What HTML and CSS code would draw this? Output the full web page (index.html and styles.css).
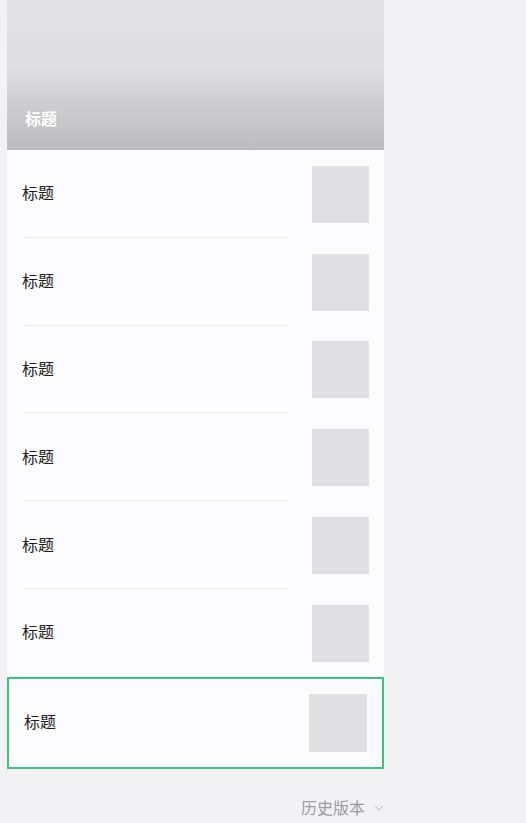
FILE: index.html
```html
<!DOCTYPE html>
<html lang="zh-CN">
<head>
    <meta charset="UTF-8">
    <meta name="viewport" content="width=device-width, initial-scale=1.0">
    <title>标题</title>
    <link rel="stylesheet" href="styles.css">
</head>
<body>
    <div class="panel">
        <!-- 封面 -->
        <div class="cover">
            <span class="cover-title">标题</span>
        </div>

        <!-- 列表 -->
        <div class="item"><span class="item-title">标题</span><div class="thumb"></div></div>
        <div class="item"><span class="item-title">标题</span><div class="thumb"></div></div>
        <div class="item"><span class="item-title">标题</span><div class="thumb"></div></div>
        <div class="item"><span class="item-title">标题</span><div class="thumb"></div></div>
        <div class="item"><span class="item-title">标题</span><div class="thumb"></div></div>
        <div class="item last"><span class="item-title">标题</span><div class="thumb"></div></div>

        <div class="item selected"><span class="item-title">标题</span><div class="thumb"></div></div>
    </div>

    <div class="history">
        历史版本
        <svg class="chevron" width="10" height="6" viewBox="0 0 10 6">
            <path d="M1 1 L5 5 L9 1" fill="none" stroke="#b5b5ba" stroke-width="1"/>
        </svg>
    </div>
</body>
</html>
```

FILE: styles.css
```css
body {
    margin: 0;
    background-color: #f2f2f5;
    font-family: "Noto Sans CJK SC", "Noto Sans", sans-serif;
}

.panel {
    width: 377px;
    margin-left: 7px;
    background-color: #fcfcfe;
}

.cover {
    height: 150px;
    display: flex;
    align-items: flex-end;
    padding: 0 18px 21px;
    box-sizing: border-box;
    background: linear-gradient(#e2e2e5 0%, #dedee1 45%, #cacacd 75%, #bcbcbf 100%);
}

.cover-title {
    color: #ffffff;
    font-size: 16px;
    font-weight: bold;
    line-height: 22px;
}

.item {
    position: relative;
    height: 87.8px;
    display: flex;
    align-items: center;
    justify-content: space-between;
    padding: 0 15px;
    box-sizing: border-box;
}

.item::after {
    content: "";
    position: absolute;
    left: 17px;
    bottom: 0;
    width: 264px;
    height: 1px;
    background-color: #ededf0;
}

.item.last::after,
.item.selected::after {
    display: none;
}

.item-title {
    font-size: 16px;
    color: #1e1e22;
    margin-bottom: 3px;
}

.thumb {
    width: 57px;
    height: 57px;
    background-color: #e0e0e3;
    margin-top: 1px;
}

.item.selected {
    height: 92px;
    border: 2px solid #3ec27f;
    padding: 0 15px;
}

.item.selected .thumb {
    width: 58px;
    height: 58px;
}

.history {
    display: flex;
    justify-content: flex-end;
    align-items: center;
    width: 384px;
    margin-top: 26px;
    font-size: 16px;
    color: #9a9aa0;
}

.chevron {
    margin-left: 9px;
    margin-top: 2px;
}
```
